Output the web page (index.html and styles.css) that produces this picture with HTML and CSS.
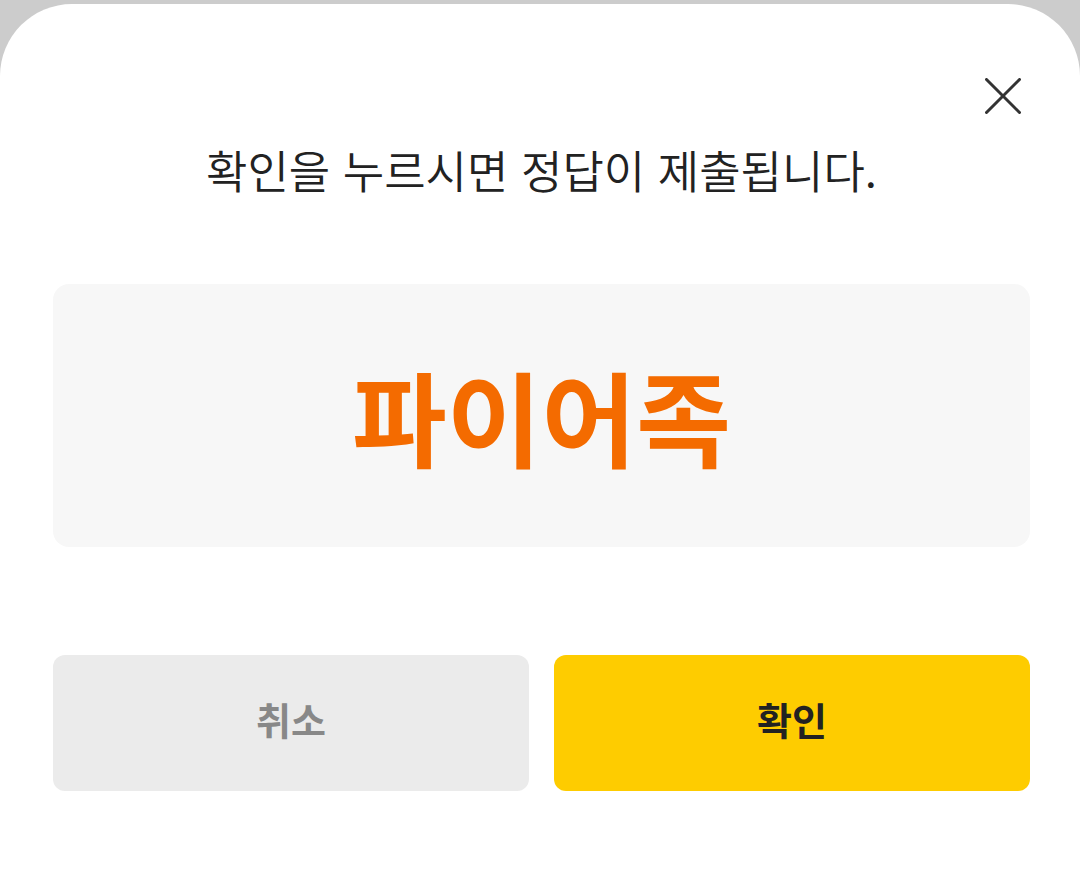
FILE: index.html
```html
<!DOCTYPE html>
<html lang="ko">
<head>
<meta charset="utf-8">
<link rel="stylesheet" href="styles.css">
</head>
<body>
<div class="sheet">
  <button class="close" aria-label="닫기">
    <svg width="36" height="36" viewBox="0 0 36 36"><path d="M1.5 1.5 L34.5 34.5 M34.5 1.5 L1.5 34.5" stroke="#333" stroke-width="3" stroke-linecap="round" fill="none"/></svg>
  </button>
  <div class="title">확인을 누르시면 정답이 제출됩니다.</div>
  <div class="card"><span class="answer">파이어족</span></div>
  <div class="actions">
    <button class="btn btn-cancel">취소</button>
    <button class="btn btn-ok">확인</button>
  </div>
</div>
</body>
</html>
```
FILE: styles.css
```css
html, body {
  margin: 0;
  padding: 0;
  background: #cccccc;
  overflow: hidden;
}
body {
  font-family: "Noto Sans CJK KR", "Noto Sans", sans-serif;
}
.sheet {
  position: relative;
  margin-top: 4px;
  height: 890px;
  background: #ffffff;
  border-radius: 72px 72px 0 0;
  padding: 135px 50px 0 53px;
  box-sizing: border-box;
  display: flex;
  flex-direction: column;
}
.close {
  position: absolute;
  top: 74px;
  right: 59px;
  width: 36px;
  height: 36px;
  padding: 0;
  border: 0;
  background: none;
  display: block;
}
.close svg { display: block; }
.title {
  height: 60px;
  display: flex;
  align-items: center;
  justify-content: center;
  font-size: 45px;
  font-weight: 350;
  color: #222222;
  white-space: nowrap;
}
.card {
  margin-top: 85px;
  height: 263px;
  background: #f7f7f7;
  border-radius: 16px;
  display: flex;
  align-items: center;
  justify-content: center;
}
.answer {
  font-size: 103px;
  font-weight: 700;
  color: #f46b00;
  line-height: 1;
}
.actions {
  margin-top: 108px;
  display: flex;
  gap: 25px;
}
.btn {
  flex: 1;
  height: 136px;
  border: 0;
  border-radius: 12px;
  font-family: "Noto Sans CJK KR", "Noto Sans", sans-serif;
  font-size: 38px;
  font-weight: 700;
  padding: 0 0 10px 0;
}
.btn-cancel {
  background: #ebebeb;
  color: #888888;
}
.btn-ok {
  background: #fecc00;
  color: #222222;
}
```
